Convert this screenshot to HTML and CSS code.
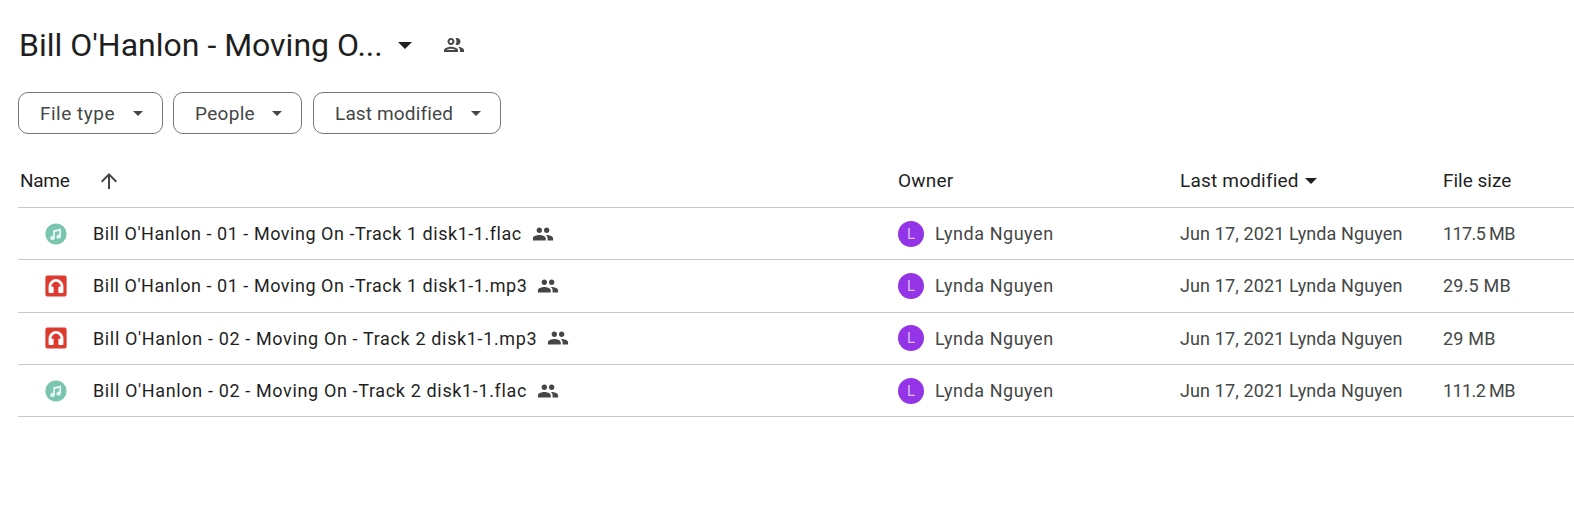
FILE: index.html
```html
<!DOCTYPE html>
<html lang="en">
<head>
<meta charset="utf-8">
<title>Bill O'Hanlon - Moving On</title>
<link rel="stylesheet" href="styles.css">
</head>
<body>
<svg class="defs" width="0" height="0" aria-hidden="true">
  <symbol id="people" viewBox="0 0 24 24"><path d="M16 11c1.66 0 2.99-1.34 2.99-3S17.66 5 16 5c-1.66 0-3 1.34-3 3s1.34 3 3 3zm-8 0c1.66 0 2.99-1.34 2.99-3S9.66 5 8 5C6.34 5 5 6.34 5 8s1.34 3 3 3zm0 2c-2.33 0-7 1.17-7 3.5V19h14v-2.5c0-2.33-4.67-3.5-7-3.5zm8 0c-.29 0-.62.02-.97.05 1.16.84 1.97 1.97 1.97 3.45V19h6v-2.5c0-2.33-4.67-3.5-7-3.5z"/></symbol>
  <symbol id="audio" viewBox="0 0 22 22"><circle cx="11" cy="11" r="10.6" fill="#79c5b0"/><path fill="#e8f5f1" d="M8.2 7.2 16 5.4v8.2a2.3 2.1 0 1 1-1.7-2V8L9.9 9v6a2.3 2.1 0 1 1-1.7-2z"/></symbol>
  <symbol id="mp3" viewBox="0 0 22 22"><rect x=".4" y=".4" width="21.2" height="21.2" rx="2" fill="#df3a30"/><path fill="#fff" d="M11 4a7.4 7.4 0 0 0-7.4 7.4V17c0 .6.4 1 1 1h3c.6 0 1-.4 1-1v-4.2c0-.6-.4-1-1-1H6.4v-.4a4.6 4.6 0 0 1 9.2 0v.4h-1.2c-.6 0-1 .4-1 1V17c0 .6.4 1 1 1h3c.6 0 1-.4 1-1v-5.6A7.4 7.4 0 0 0 11 4z"/></symbol>
</svg>
<main class="page">
  <header class="title-row">
    <h1 class="title">Bill O'Hanlon - Moving O...</h1>
    <span class="title-caret"></span>
    <svg class="title-people" viewBox="0 0 24 24"><path d="M9 13.75c-2.34 0-7 1.17-7 3.5V19h14v-1.75c0-2.33-4.66-3.5-7-3.5zM4.34 17c.84-.58 2.87-1.25 4.66-1.25s3.82.67 4.66 1.25H4.34zM9 12c1.93 0 3.5-1.57 3.5-3.5S10.93 5 9 5 5.5 6.57 5.5 8.5 7.07 12 9 12zm0-5c.83 0 1.5.67 1.5 1.5S9.83 10 9 10s-1.5-.67-1.5-1.5S8.17 7 9 7zm7.04 6.81c1.16.84 1.96 1.96 1.96 3.44V19h4v-1.75c0-2.02-3.5-3.17-5.96-3.44zM15 12c1.93 0 3.5-1.57 3.5-3.5S16.93 5 15 5c-.54 0-1.04.13-1.5.35.63.89 1 1.98 1 3.15s-.37 2.26-1 3.15c.46.22.96.35 1.5.35z"/></svg>
  </header>
  <div class="filters">
    <button class="chip chip-type">File type<span class="chip-caret"></span></button>
    <button class="chip chip-people">People<span class="chip-caret"></span></button>
    <button class="chip chip-date">Last modified<span class="chip-caret"></span></button>
  </div>
  <section class="table">
    <div class="row head">
      <div class="cell name-head">Name<svg class="sort" viewBox="0 0 24 24"><path d="M4 12l1.41 1.41L11 7.83V20h2V7.83l5.58 5.59L20 12l-8-8-8 8z"/></svg></div>
      <div class="cell">Owner</div>
      <div class="cell">Last modified<span class="head-caret"></span></div>
      <div class="cell size-head">File size</div>
    </div>
    <div class="row">
      <div class="cell name"><svg class="file-icon"><use href="#audio"/></svg><span>Bill O'Hanlon - 01 - Moving On -Track 1 disk1-1.flac</span><svg class="shared"><use href="#people"/></svg></div>
      <div class="cell owner"><span class="avatar">L</span>Lynda Nguyen</div>
      <div class="cell muted">Jun 17, 2021 Lynda Nguyen</div>
      <div class="cell size narrow">117.5 MB</div>
    </div>
    <div class="row">
      <div class="cell name"><svg class="file-icon"><use href="#mp3"/></svg><span>Bill O'Hanlon - 01 - Moving On -Track 1 disk1-1.mp3</span><svg class="shared"><use href="#people"/></svg></div>
      <div class="cell owner"><span class="avatar">L</span>Lynda Nguyen</div>
      <div class="cell muted">Jun 17, 2021 Lynda Nguyen</div>
      <div class="cell size">29.5 MB</div>
    </div>
    <div class="row">
      <div class="cell name wide"><svg class="file-icon"><use href="#mp3"/></svg><span>Bill O'Hanlon - 02 - Moving On - Track 2 disk1-1.mp3</span><svg class="shared"><use href="#people"/></svg></div>
      <div class="cell owner"><span class="avatar">L</span>Lynda Nguyen</div>
      <div class="cell muted">Jun 17, 2021 Lynda Nguyen</div>
      <div class="cell size">29 MB</div>
    </div>
    <div class="row">
      <div class="cell name wide"><svg class="file-icon"><use href="#audio"/></svg><span>Bill O'Hanlon - 02 - Moving On -Track 2 disk1-1.flac</span><svg class="shared"><use href="#people"/></svg></div>
      <div class="cell owner"><span class="avatar">L</span>Lynda Nguyen</div>
      <div class="cell muted">Jun 17, 2021 Lynda Nguyen</div>
      <div class="cell size narrow">111.2 MB</div>
    </div>
  </section>
</main>
</body>
</html>
```
FILE: styles.css
```css
* { box-sizing: border-box; }
html, body { margin: 0; background: #fff; overflow: hidden; }
body { font-family: Roboto, "Liberation Sans", sans-serif; color: #1f1f1f; }
.defs { position: absolute; }
.page { height: 515px; padding: 23px 0 0 18px; }
.title-row { display: flex; align-items: center; height: 44px; }
.title { margin: 0 0 0 1px; font-size: 32px; font-weight: 400; line-height: 44px; white-space: nowrap; }
.title-caret { width: 0; height: 0; margin-left: 15px; border: 7px solid transparent; border-bottom: 0; border-top-color: #1f1f1f; }
.title-people { width: 24px; height: 24px; margin-left: 30px; fill: #444746; }
.filters { display: flex; gap: 10px; margin-top: 25px; }
.chip { display: flex; align-items: center; justify-content: space-between; height: 42px; padding: 0 19px 0 21px; border: 1px solid #747775; border-radius: 10px; background: #fff; color: #444746; font: 400 19px Roboto, sans-serif; letter-spacing: 0.3px; }
.chip-type { width: 145px; letter-spacing: 0.5px; }
.chip-people { width: 129px; margin-right: 1px; }
.chip-date { width: 188px; letter-spacing: 0.15px; }
.chip-caret { width: 0; height: 0; border: 5px solid transparent; border-bottom: 0; border-top-color: #444746; }
.table { margin-top: 22px; font-size: 18px; letter-spacing: 0.54px; }
.row { display: grid; grid-template-columns: 880px 282px 263px 1fr; align-items: center; height: 52.3px; border-bottom: 1px solid #c7c7c7; }
.row.head { height: 52px; padding-bottom: 2px; color: #1f1f1f; font-size: 19px; letter-spacing: 0.2px; }
.cell { display: flex; align-items: center; white-space: nowrap; min-width: 0; }
.name-head { padding-left: 2px; letter-spacing: -0.3px; }
.size-head { letter-spacing: 0; }
.sort { width: 24px; height: 24px; margin-left: 28px; fill: #444746; }
.head-caret { width: 0; height: 0; margin-left: 6px; border: 6px solid transparent; border-bottom: 0; border-top-color: #1f1f1f; }
.name { padding-left: 27px; color: #1f1f1f; }
.wide { letter-spacing: 0.64px; }
.file-icon { flex: none; width: 22px; height: 22px; margin-right: 26px; }
.shared { flex: none; width: 22px; height: 22px; margin-left: 10px; fill: #444746; }
.owner { color: #444746; }
.avatar { display: flex; align-items: center; justify-content: center; width: 26px; height: 26px; margin-right: 11px; border-radius: 50%; background: #9334e6; color: #d9bdf6; font-size: 15px; letter-spacing: 0; }
.muted { color: #444746; letter-spacing: 0.12px; }
.size { color: #444746; letter-spacing: 0.2px; }
.narrow { letter-spacing: -0.6px; }
```
